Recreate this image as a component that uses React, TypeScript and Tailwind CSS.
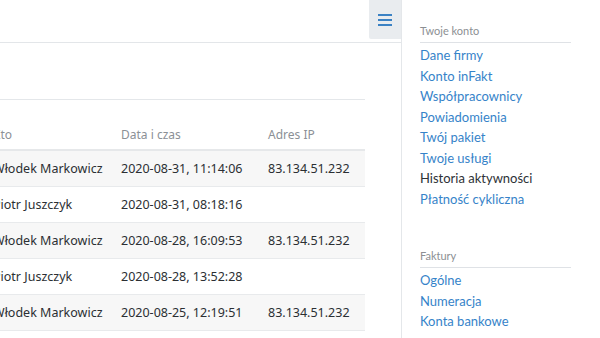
import React from 'react';

const rows = [
    { name: 'Włodek Markowicz', date: '2020-08-31, 11:14:06', ip: '83.134.51.232' },
    { name: 'Piotr Juszczyk', date: '2020-08-31, 08:18:16', ip: '' },
    { name: 'Włodek Markowicz', date: '2020-08-28, 16:09:53', ip: '83.134.51.232' },
    { name: 'Piotr Juszczyk', date: '2020-08-28, 13:52:28', ip: '' },
    { name: 'Włodek Markowicz', date: '2020-08-25, 12:19:51', ip: '83.134.51.232' },
];

const sections = [
    {
        title: 'Twoje konto',
        links: [
            'Dane firmy',
            'Konto inFakt',
            'Współpracownicy',
            'Powiadomienia',
            'Twój pakiet',
            'Twoje usługi',
            'Historia aktywności',
            'Płatność cykliczna',
        ],
    },
    {
        title: 'Faktury',
        links: ['Ogólne', 'Numeracja', 'Konta bankowe'],
    },
];

const active = 'Historia aktywności';

export default function App() {
    return (
        <div className="flex w-[600px] h-[338px] overflow-hidden bg-white">
            {/* main content, scrolled a bit to the left */}
            <main className="w-[402px] shrink-0 border-r border-[#e4e7ea] overflow-hidden font-['Noto_Sans',sans-serif]">
                <div className="h-[43px] border-b border-[#e3e6e9] flex justify-end items-start">
                    <button className="w-[32px] h-[39px] bg-[#e9ecef] rounded-bl-[2px] flex items-center justify-center">
                        <svg width="14" height="12" viewBox="0 0 14 12">
                            <rect x="0" y="0" width="14" height="2" fill="#3b82c4" />
                            <rect x="0" y="5" width="14" height="2" fill="#3b82c4" />
                            <rect x="0" y="10" width="14" height="2" fill="#3b82c4" />
                        </svg>
                    </button>
                </div>

                <div className="w-[365px] h-[57px] border-b border-[#e4e7ea]" />

                <div className="ml-[-7px] w-[372px] pt-[27px]">
                    <div className="grid grid-cols-[128px_147px_1fr] text-[12px] leading-[16px] text-[#8b9096] pb-[6px] border-b-2 border-[#e6e8ea]">
                        <div>Kto</div>
                        <div>Data i czas</div>
                        <div>Adres IP</div>
                    </div>
                    {rows.map((r, i) => (
                        <div
                            key={i}
                            className={`grid grid-cols-[128px_147px_1fr] h-[36px] items-center text-[12.5px] text-[#2b2f33] border-b border-[#e8eaec] ${i % 2 === 0 ? 'bg-[#f7f7f7]' : 'bg-white'}`}
                        >
                            <div className="whitespace-nowrap pt-[1px]">{r.name}</div>
                            <div className="whitespace-nowrap pt-[1px]">{r.date}</div>
                            <div className="whitespace-nowrap pt-[1px]">{r.ip}</div>
                        </div>
                    ))}
                </div>
            </main>

            {/* settings sidebar */}
            <aside className="flex-1 pl-[18px] pt-[24px] font-['Lato',sans-serif]">
                {sections.map((s, si) => (
                    <div key={s.title} className={si > 0 ? 'mt-[40px] w-[151px]' : 'w-[151px]'}>
                        <div className="text-[11px] leading-[14px] text-[#8c8f93] pb-[4px] border-b border-[#dfe2e6]">
                            {s.title}
                        </div>
                        <ul className="pt-[2px]">
                            {s.links.map((l) => (
                                <li
                                    key={l}
                                    className={`text-[13px] leading-[20.5px] whitespace-nowrap ${l === active ? 'text-[#2e3236]' : 'text-[#3683c9]'}`}
                                >
                                    {l}
                                </li>
                            ))}
                        </ul>
                    </div>
                ))}
            </aside>
        </div>
    );
}
